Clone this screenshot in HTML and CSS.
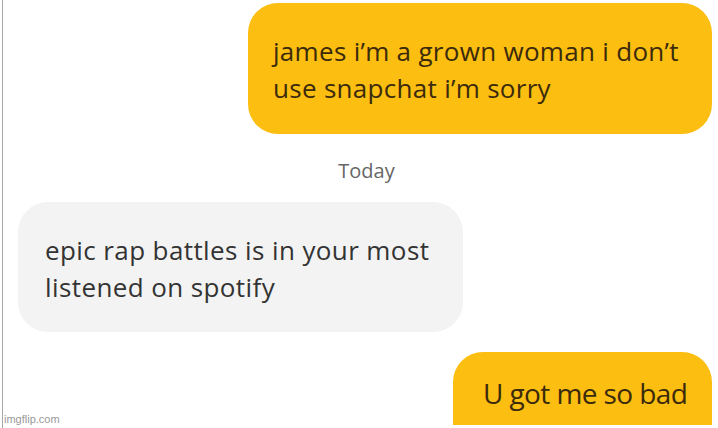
FILE: index.html
```html
<!DOCTYPE html>
<html lang="en">
<head>
    <meta charset="UTF-8">
    <meta name="viewport" content="width=device-width, initial-scale=1.0">
    <title>Messages</title>
    <link rel="stylesheet" href="styles.css">
</head>
<body>
    <div class="thread">
        <div class="bubble sent first">james i’m a grown woman i don’t<br>use snapchat i’m sorry</div>

        <div class="day">Today</div>

        <div class="bubble received">epic rap battles is in your most<br>listened on spotify</div>

        <div class="bubble sent last">U got me so bad</div>
    </div>
    <div class="watermark">imgflip.com</div>
</body>
</html>
```

FILE: styles.css
```css
html, body {
    margin: 0;
    height: 100%;
}
body {
    font-family: "Open Sans", Lato, sans-serif;
    background-color: white;
    overflow: hidden;
    position: relative;
}
.thread {
    height: 100%;
    margin-left: 2px;
    border-left: 1px solid #a8a8a8;
    display: flex;
    flex-direction: column;
    box-sizing: border-box;
    padding-top: 3px;
    overflow: hidden;
}
.bubble {
    flex-shrink: 0;
    border-radius: 30px;
    font-size: 26px;
    letter-spacing: 0.3px;
    line-height: 37px;
    box-sizing: border-box;
}
.sent {
    align-self: flex-end;
    margin-right: 6px;
    background-color: #fcbe10;
    color: #3b2b0c;
}
.sent.first {
    width: 464px;
    height: 131px;
    padding: 30px 0 0 25px;
}
/* last bubble runs off the bottom of the screen */
.sent.last {
    width: 259px;
    height: 73px;
    margin-top: 20px;
    padding: 23px 0 0 30px;
    border-radius: 30px 30px 0 0;
    font-size: 28px;
    letter-spacing: -0.6px;
}
.day {
    flex-shrink: 0;
    text-align: center;
    color: #666;
    font-size: 20px;
    margin: 23px 0 0 0;
    height: 45px;
    padding-left: 12px;
}
.received {
    align-self: flex-start;
    margin-left: 15px;
    width: 445px;
    height: 130px;
    padding: 30px 0 0 27px;
    background-color: #f3f3f3;
    color: #333;
    letter-spacing: 0.4px;
}
.watermark {
    position: absolute;
    left: 4px;
    bottom: 3px;
    font-family: "Liberation Sans", Arial, sans-serif;
    font-size: 11px;
    color: #999;
}
```
